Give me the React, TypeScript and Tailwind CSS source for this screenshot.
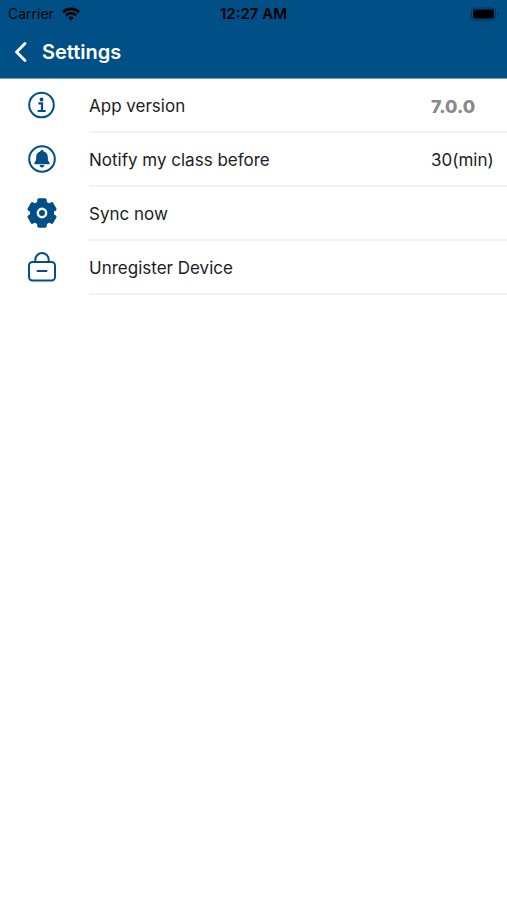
import type { ReactNode } from "react";

function InfoIcon() {
  return (
    <svg viewBox="0 0 30 30" className="size-[30px]" fill="none" stroke="currentColor" strokeWidth="2" aria-hidden="true">
      <circle cx="14.500" cy="15" r="12.300" />
      <circle cx="14.500" cy="9.500" r="1.900" fill="currentColor" stroke="none" />
      <path d="M11.300 13.400h3.700v7.400M10.700 21h8" strokeWidth="2.200" />
    </svg>
  );
}

function BellIcon() {
  return (
    <svg viewBox="0 0 30 30" className="size-[30px]" fill="none" aria-hidden="true">
      <circle cx="15" cy="15" r="12.800" stroke="currentColor" strokeWidth="2" />
      <path
        fill="currentColor"
        d="M15 6c1 0 1.700.6 1.700 1.500 2.600.7 4.100 2.800 4.100 5.500 0 3 .5 4.200 1.300 5 .4.400.6.800.6 1.200 0 .6-.4 1-1 1H8.300c-.6 0-1-.4-1-1 0-.4.200-.8.6-1.200.8-.8 1.300-2 1.300-5 0-2.700 1.500-4.800 4.100-5.500C13.300 6.600 14 6 15 6z"
      />
      <path fill="currentColor" d="M12.600 21.100h4.800c-.1 1.400-1 2.300-2.400 2.300s-2.300-.9-2.400-2.300z" />
    </svg>
  );
}

function GearIcon() {
  return (
    <svg viewBox="0 0 30 30" className="size-[30px]" aria-hidden="true">
      <g fill="currentColor">
        <circle cx="15" cy="15" r="12" />
        {[0, 60, 120].map((angle) => (
          <rect key={angle} x="10.200" y="0.300" width="9.600" height="29.400" rx="1.800" transform={`rotate(${angle} 15 15)`} />
        ))}
      </g>
      <circle cx="15" cy="15" r="4.200" fill="none" stroke="white" strokeWidth="2.400" />
    </svg>
  );
}

function LockIcon() {
  return (
    <svg viewBox="0 0 30 30" className="size-[30px]" fill="none" stroke="currentColor" strokeWidth="2" strokeLinecap="round" aria-hidden="true">
      <rect x="2" y="10" width="26" height="18.500" rx="3.500" />
      <path d="M8.300 10V7.800a6.700 6.700 0 0 1 13.400 0V10M10.500 19h9" />
    </svg>
  );
}

function StatusBar() {
  return (
    <div className="grid h-7 grid-cols-3 items-center pl-2 pr-2 text-black">
      <div className="flex items-center gap-2 text-sm">
        <span>Carrier</span>
        <svg viewBox="0 0 18 14" className="h-3.5 w-[18px]" fill="none" stroke="currentColor" strokeWidth="2.6" aria-label="Wi-Fi">
          <path d="M1 5.200a11.400 11.400 0 0 1 16 0M3.900 8.400a7.300 7.300 0 0 1 10.200 0" />
          <path d="M9 13.600 6.200 10.800a4 4 0 0 1 5.600 0z" fill="currentColor" stroke="none" />
        </svg>
      </div>
      <span className="text-center text-[15px] font-semibold">12:27 AM</span>
      <svg viewBox="0 0 28 14" className="h-3.5 w-7 justify-self-end" aria-label="Battery full">
        <rect x="0.500" y="1" width="24" height="12" rx="3.500" fill="none" stroke="black" strokeOpacity="0.35" />
        <rect x="2" y="2.500" width="21" height="9" rx="2" fill="black" />
        <path d="M26 5v4c1.200-.4 1.600-1.100 1.600-2S27.200 5.400 26 5z" fill="black" fillOpacity="0.35" />
      </svg>
    </div>
  );
}

function Row({ icon, label, children }: { icon: ReactNode; label: string; children?: ReactNode }) {
  return (
    <span className="flex w-full items-stretch text-left">
      <span className="flex w-[89px] shrink-0 items-center pb-0.5 pl-[27px] text-[#004f86]">{icon}</span>
      <span className="flex h-[54px] flex-1 items-center border-b-2 border-[#f1f1f2] pt-1 text-[17px] text-[#1c1c1e]">
        <span className="flex-1">{label}</span>
        {children}
      </span>
    </span>
  );
}

export default function App() {
  return (
    <div className="min-h-screen bg-white font-['Inter',sans-serif]">
      <header className="border-b border-[#6d9cbf] bg-[#004f86]">
        <StatusBar />
        <div className="flex h-[50px] items-center gap-3.5 pb-0.5 pl-3.5 text-white">
          <button type="button" aria-label="Back">
            <svg viewBox="0 0 14 22" className="h-[22px] w-3.5" fill="none" stroke="currentColor" strokeWidth="2.800" strokeLinecap="round" strokeLinejoin="round">
              <path d="M11 2.500 2.500 11l8.500 8.500" />
            </svg>
          </button>
          <h1 className="text-xl font-semibold">Settings</h1>
        </div>
      </header>
      <main>
        <Row icon={<InfoIcon />} label="App version">
          <span className="w-[76px] text-lg font-extrabold text-[#8a8a8d]">7.0.0</span>
        </Row>
        <button type="button" className="block w-full">
          <Row icon={<BellIcon />} label="Notify my class before">
            <span className="w-[76px]">30(min)</span>
          </Row>
        </button>
        <button type="button" className="block w-full">
          <Row icon={<GearIcon />} label="Sync now" />
        </button>
        <button type="button" className="block w-full">
          <Row icon={<LockIcon />} label="Unregister Device" />
        </button>
      </main>
    </div>
  );
}
